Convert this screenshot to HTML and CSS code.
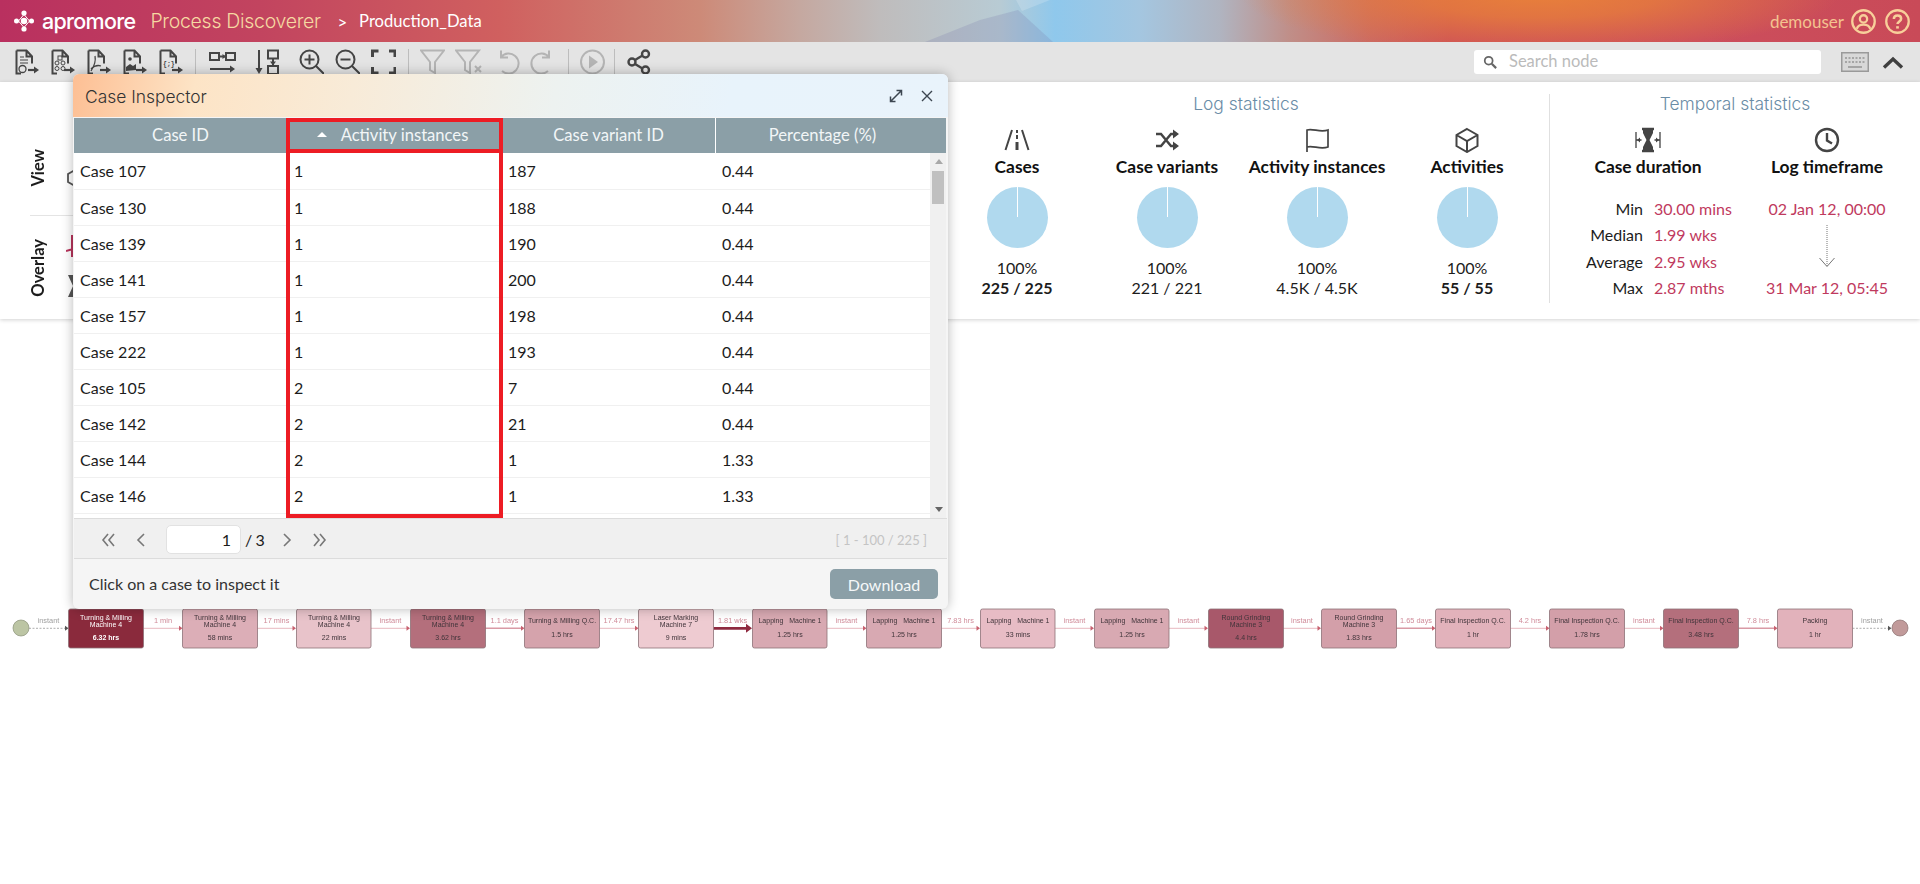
FILE: index.html
```html
<!DOCTYPE html>
<html lang="en">
<head>
<meta charset="utf-8">
<title>Process Discoverer</title>
<link rel="stylesheet" href="styles.css">
</head>
<body>
<svg class="defs" width="0" height="0" aria-hidden="true">
  <symbol id="doc" viewBox="0 0 25 26">
    <path d="M2.5 1.5h10l5.500 6v7M12.500 1.500v6h5.500M7 24.500H2.500v-23" fill="none" stroke="currentColor" stroke-width="2"/>
    <path d="M14 21h7" fill="none" stroke="currentColor" stroke-width="2.200"/>
    <path d="M20 17.500l5 3.500-5 3.500z" fill="currentColor"/>
  </symbol>
  <symbol id="chev2" viewBox="0 0 16 16">
    <path d="M7 2L2 8l5 6M13 2L8 8l5 6" fill="none" stroke="currentColor" stroke-width="1.600"/>
  </symbol>
</svg>

<header class="topbar">
  <svg class="logo" viewBox="0 0 20 22" width="20" height="22">
    <path d="M10 4.500L15.500 11 10 17.500 4.500 11z" fill="none" stroke="#fff" stroke-width="1"/>
    <circle cx="10" cy="11" r="3.200" fill="#fff"/>
    <circle cx="10" cy="3" r="2.600" fill="#fff"/><circle cx="10" cy="19" r="2.600" fill="#fff"/>
    <circle cx="2.500" cy="11" r="2.500" fill="#fff"/><circle cx="17.500" cy="11" r="2.500" fill="#fff"/>
  </svg>
  <span class="brand">apromore</span>
  <span class="product">Process Discoverer</span>
  <span class="crumb-sep">&gt;</span>
  <span class="crumb">Production_Data</span>
  <div class="user">
    <span class="username">demouser</span>
    <svg viewBox="0 0 24 24" width="25" height="25" class="user-icon"><circle cx="12" cy="12" r="10.800"/><circle cx="12" cy="9.500" r="3.500"/><path d="M5.500 19c1-3 3.500-4 6.500-4s5.500 1 6.500 4"/></svg>
    <svg viewBox="0 0 24 24" width="25" height="25" class="user-icon"><circle cx="12" cy="12" r="10.800"/><path d="M8.500 9.500c0-2 1.500-3.300 3.500-3.300s3.500 1.300 3.500 3.100c0 2.600-3.500 2.700-3.500 5.200" stroke-width="2.400"/><path d="M12 16.500v2.300" stroke-width="2.600"/></svg>
  </div>
</header>

<nav class="toolbar">
  <svg class="tool" viewBox="0 0 25 26"><use href="#doc"/><path d="M6 8h4M6 11h8M6 14h8" stroke="currentColor" fill="none"/><circle cx="8.500" cy="20" r="3.500" fill="none" stroke="currentColor" stroke-width="1.300"/></svg>
  <svg class="tool" viewBox="0 0 25 26"><use href="#doc"/><g fill="none" stroke="currentColor"><rect x="8" y="7" width="4" height="4"/><circle cx="7" cy="14" r="2"/><circle cx="13" cy="14" r="2"/><circle cx="7" cy="19.500" r="2"/><circle cx="13" cy="19.500" r="2"/></g></svg>
  <svg class="tool" viewBox="0 0 25 26"><use href="#doc"/><path d="M9 7c1 5 0 9-4 15M5 20c3-3 7-4 10-3" fill="none" stroke="currentColor" stroke-width="1.300"/></svg>
  <svg class="tool" viewBox="0 0 25 26"><use href="#doc"/><circle cx="8" cy="10" r="1.800" fill="currentColor"/><path d="M4 22v-4l4-3 3 2 3-2v6z" fill="currentColor"/></svg>
  <svg class="tool" viewBox="0 0 25 26"><use href="#doc"/><text x="5" y="17" class="tool-json">{;}</text></svg>
  <span class="sep sep-a"></span>
  <svg class="tool tool-wide" viewBox="0 0 27 26" ><g fill="none" stroke="currentColor" stroke-width="2"><rect x="1" y="4" width="9" height="7"/><rect x="17" y="4" width="9" height="7"/><path d="M10 7.500h7M1 20h23"/></g><path d="M21 16.500l5 3.500-5 3.500zM13.500 5l3.500 2.500-3.500 2.500z" fill="currentColor"/></svg>
  <svg class="tool tool-b" viewBox="0 0 25 26"><g fill="none" stroke="currentColor" stroke-width="2"><rect x="13" y="1.500" width="10" height="8"/><rect x="13" y="17" width="10" height="8"/><path d="M18 9.500V17M4 1v22"/></g><path d="M.5 19l3.500 6 3.500-6zM15 12.500l3 4 3-4z" fill="currentColor"/></svg>
  <svg class="tool tool-c" viewBox="0 0 25 26"><g fill="none" stroke="currentColor" stroke-width="2"><circle cx="10.500" cy="10.500" r="9"/><path d="M17 17l8 8M10.500 5.500v10M5.500 10.500h10"/></g></svg>
  <svg class="tool tool-d" viewBox="0 0 25 26"><g fill="none" stroke="currentColor" stroke-width="2"><circle cx="10.500" cy="10.500" r="9"/><path d="M17 17l8 8M5.500 10.500h10"/></g></svg>
  <svg class="tool tool-d" viewBox="0 0 25 26"><path d="M1.500 8V2h6M18 2h6v6M24 18v6h-6M7.500 24h-6v-6" fill="none" stroke="currentColor" stroke-width="3"/></svg>
  <span class="sep sep-b"></span>
  <svg class="tool tool-off tool-e" viewBox="0 0 25 26"><path d="M1 1.500h23L15 13v11l-5-3v-8z" fill="none" stroke="currentColor" stroke-width="2"/></svg>
  <svg class="tool tool-off tool-f" viewBox="0 0 28 26"><path d="M1 1.500h23L15 13v11l-5-3v-8z" fill="none" stroke="currentColor" stroke-width="2"/><path d="M20 17l6 6M26 17l-6 6" stroke="currentColor" stroke-width="2"/></svg>
  <svg class="tool tool-off tool-g" viewBox="0 0 25 26"><path d="M6 8a10 10 0 1 1 1 14M6 1.500V8.500h7" fill="none" stroke="currentColor" stroke-width="2"/></svg>
  <svg class="tool tool-off tool-h" viewBox="0 0 25 26"><path d="M19 8a10 10 0 1 0-1 14M19 1.500V8.500h-7" fill="none" stroke="currentColor" stroke-width="2"/></svg>
  <span class="sep sep-c"></span>
  <svg class="tool tool-off tool-i" viewBox="0 0 25 26"><circle cx="12.500" cy="13" r="11.500" fill="none" stroke="currentColor" stroke-width="2"/><path d="M9 6.500l9 6.500-9 6.500z" fill="currentColor"/></svg>
  <span class="sep sep-d"></span>
  <svg class="tool tool-j" viewBox="0 0 24 26"><g fill="none" stroke="currentColor" stroke-width="2.400"><circle cx="18.500" cy="5" r="3.500"/><circle cx="5" cy="13" r="3.500"/><circle cx="18.500" cy="21" r="3.500"/><path d="M8 11l7.500-4.500M8 15l7.500 4.500"/></g></svg>

  <label class="search">
    <svg viewBox="0 0 16 16" width="14" height="14"><circle cx="6.500" cy="6.500" r="4.500" fill="none" stroke="#666" stroke-width="2"/><path d="M10 10l5 5" stroke="#666" stroke-width="2.500"/></svg>
    <span class="placeholder">Search node</span>
  </label>
  <svg class="keyboard" viewBox="0 0 28 20" width="28" height="20"><rect x=".75" y=".75" width="26.500" height="18.500" fill="#d8d8d8" stroke="#9a9a9a" stroke-width="1.500"/><path d="M4 6h20M4 10h20" stroke="#a5a5a5" stroke-width="2" stroke-dasharray="2 1.500"/><path d="M7 15h14" stroke="#a5a5a5" stroke-width="2"/></svg>
  <svg class="collapse" viewBox="0 0 22 13" width="22" height="13"><path d="M2 11.500L11 3l9 8.500" fill="none" stroke="#3f3f3f" stroke-width="3.400"/></svg>
</nav>

<section class="stats">
  <div class="modes">
    <div class="mode">
      <span class="mode-label">View</span>
      <svg viewBox="0 0 16 18" width="16" height="18" class="mode-icon"><path d="M8 1l7 4v8l-7 4-7-4V5z" fill="none" stroke="#555" stroke-width="1.800"/></svg>
    </div>
    <div class="mode mode-overlay">
      <span class="mode-label">Overlay</span>
      <div class="mode-icons">
        <svg viewBox="0 0 16 24" width="16" height="24"><path d="M6 1v22M0 17l7-2" fill="none" stroke="#b8345c" stroke-width="2"/></svg>
        <svg viewBox="0 0 16 24" width="16" height="24"><path d="M2 1h12L9 12l5 11H2l5-11z" fill="#555"/></svg>
      </div>
    </div>
  </div>

  <div class="stat-group log">
    <h2 class="group-title">Log statistics</h2>
    <div class="stat-cols">
      <div class="stat">
        <svg class="stat-icon" viewBox="0 0 26 26"><path d="M8 3L1.500 23M18 3l6.500 20" fill="none" stroke="#444" stroke-width="2"/><path d="M12 3h2v3h-2zM12 8h2v4h-2zM11.500 15h3v8h-3z" fill="#444"/></svg>
        <h3 class="stat-name">Cases</h3>
        <div class="pie"></div>
        <div class="pct">100%</div>
        <div class="ratio strong">225 / 225</div>
      </div>
      <div class="stat">
        <svg class="stat-icon" viewBox="0 0 26 26"><path d="M2 7h5l10 12h4M2 19h5l10-12h4" fill="none" stroke="#444" stroke-width="2.400"/><path d="M19 2.500l6 4.500-6 4.500zM19 14.500l6 4.500-6 4.500z" fill="#444"/></svg>
        <h3 class="stat-name">Case variants</h3>
        <div class="pie"></div>
        <div class="pct">100%</div>
        <div class="ratio">221 / 221</div>
      </div>
      <div class="stat">
        <svg class="stat-icon" viewBox="0 0 26 26"><path d="M3 25V3c6-2 13 3 21 0v17c-8 3-15-2-21 0" fill="none" stroke="#444" stroke-width="1.700"/></svg>
        <h3 class="stat-name">Activity instances</h3>
        <div class="pie"></div>
        <div class="pct">100%</div>
        <div class="ratio">4.5K / 4.5K</div>
      </div>
      <div class="stat">
        <svg class="stat-icon" viewBox="0 0 26 26"><path d="M13 2l10.500 6v11L13 25 2.500 19V8zM2.500 8L13 14l10.500-6M13 14v11" fill="none" stroke="#444" stroke-width="2"/></svg>
        <h3 class="stat-name">Activities</h3>
        <div class="pie"></div>
        <div class="pct">100%</div>
        <div class="ratio strong">55 / 55</div>
      </div>
    </div>
  </div>

  <div class="stat-group temporal">
    <h2 class="group-title">Temporal statistics</h2>
    <div class="temporal-cols">
      <div class="duration">
        <svg class="stat-icon" viewBox="0 0 26 26"><path d="M7 2h12M7 24h12" stroke="#444" stroke-width="2.500"/><path d="M8 3h10v3l-3.500 7 3.500 7v3H8v-3l3.500-7L8 6z" fill="#444"/><path d="M1 5v16M25 5v16M1.500 13h5M19.500 13h5" stroke="#444" stroke-width="1.300"/><path d="M2 13l3-2.500v5zM24 13l-3-2.500v5z" fill="#444"/></svg>
        <h3 class="stat-name">Case duration</h3>
        <dl class="duration-list">
          <dt>Min</dt><dd>30.00 mins</dd>
          <dt>Median</dt><dd>1.99 wks</dd>
          <dt>Average</dt><dd>2.95 wks</dd>
          <dt>Max</dt><dd>2.87 mths</dd>
        </dl>
      </div>
      <div class="timeframe">
        <svg class="stat-icon" viewBox="0 0 26 26"><circle cx="13" cy="13" r="11" fill="none" stroke="#444" stroke-width="2.400"/><path d="M13 6v7.500l5 3" fill="none" stroke="#444" stroke-width="2.400"/></svg>
        <h3 class="stat-name">Log timeframe</h3>
        <div class="time-value">02 Jan 12, 00:00</div>
        <svg class="time-arrow" viewBox="0 0 18 44" width="18" height="44"><path d="M9 0v41" stroke="#777" stroke-dasharray="1 1" fill="none"/><path d="M1.500 33L9 41.500 16.500 33" fill="none" stroke="#777"/></svg>
        <div class="time-value">31 Mar 12, 05:45</div>
      </div>
    </div>
  </div>
</section>

<main class="map">
  <svg class="map-svg" viewBox="0 600 1920 60" width="1920" height="60">
    <circle cx="21" cy="628" r="8" class="start"/>
    <circle cx="1900" cy="628" r="8" class="end"/>
    <g class="edges">
      <path class="e-dash" d="M29 628.300h36"/><path class="a-grey" d="M65 625.800l3.500 2.500-3.500 2.500z"/>
      <path class="e-l" d="M143.500 628.300h36"/><path class="a" d="M179 625.800l3.500 2.500-3.500 2.500z"/>
      <path class="e-l" d="M257.500 628.300h36"/><path class="a" d="M292.500 625.800l3.500 2.500-3.500 2.500z"/>
      <path class="e-l" d="M371 628.300h36"/><path class="a" d="M406.500 625.800l3.500 2.500-3.500 2.500z"/>
      <path class="e-m" d="M485 628.300h36"/><path class="a" d="M521 625.800l3.500 2.500-3.500 2.500z"/>
      <path class="e-l" d="M599.500 628.300h36"/><path class="a" d="M635 625.800l3.500 2.500-3.500 2.500z"/>
      <path class="e-h" d="M713.500 628.300h33"/><path class="a-h" d="M746 623.800l6 4.500-6 4.500z"/>
      <path class="e-l" d="M827 628.300h36"/><path class="a" d="M863 625.800l3.500 2.500-3.500 2.500z"/>
      <path class="e-l" d="M941.500 628.300h36"/><path class="a" d="M976.500 625.800l3.500 2.500-3.500 2.500z"/>
      <path class="e-l" d="M1055 628.300h36"/><path class="a" d="M1090.500 625.800l3.500 2.500-3.500 2.500z"/>
      <path class="e-l" d="M1169 628.300h36"/><path class="a" d="M1204.500 625.800l3.500 2.500-3.500 2.500z"/>
      <path class="e-l" d="M1283 628.300h36"/><path class="a" d="M1317.500 625.800l3.500 2.500-3.500 2.500z"/>
      <path class="e-m" d="M1396 628.300h36"/><path class="a" d="M1432 625.800l3.500 2.500-3.500 2.500z"/>
      <path class="e-l" d="M1510.500 628.300h36"/><path class="a" d="M1546 625.800l3.500 2.500-3.500 2.500z"/>
      <path class="e-l" d="M1624.500 628.300h36"/><path class="a" d="M1660 625.800l3.500 2.500-3.500 2.500z"/>
      <path class="e-m" d="M1738.500 628.300h36"/><path class="a" d="M1774 625.800l3.500 2.500-3.500 2.500z"/>
      <path class="e-dash" d="M1852.500 628.300h36"/><path class="a-grey" d="M1888 625.800l3.500 2.500-3.500 2.500z"/>
    </g>
    <g class="edge-labels">
      <text x="48.500" y="623" class="lbl-grey">instant</text>
      <text x="163" y="623">1 min</text>
      <text x="276.500" y="623">17 mins</text>
      <text x="390.500" y="623">instant</text>
      <text x="504.500" y="623">1.1 days</text>
      <text x="619" y="623">17.47 hrs</text>
      <text x="732.500" y="623">1.81 wks</text>
      <text x="846.500" y="623">instant</text>
      <text x="960.500" y="623">7.83 hrs</text>
      <text x="1074.500" y="623">instant</text>
      <text x="1188.500" y="623">instant</text>
      <text x="1302" y="623">instant</text>
      <text x="1416" y="623">1.65 days</text>
      <text x="1530" y="623">4.2 hrs</text>
      <text x="1644" y="623">instant</text>
      <text x="1758" y="623">7.8 hrs</text>
      <text x="1872" y="623" class="lbl-grey">instant</text>
    </g>
    <g class="nodes">
      <g class="node-dark"><rect x="68.500" y="609" width="75" height="39" rx="2" class="c1"/><text x="106" y="620">Turning &amp; Milling</text><text x="106" y="626.500">Machine 4</text><text x="106" y="640" class="bold">6.32 hrs</text></g>
      <g><rect x="182.500" y="609" width="75" height="39" rx="2" class="c2"/><text x="220" y="620">Turning &amp; Milling</text><text x="220" y="626.500">Machine 4</text><text x="220" y="640">58 mins</text></g>
      <g><rect x="296.500" y="609" width="74.500" height="39" rx="2" class="c3"/><text x="334" y="620">Turning &amp; Milling</text><text x="334" y="626.500">Machine 4</text><text x="334" y="640">22 mins</text></g>
      <g><rect x="410.500" y="609" width="75" height="39" rx="2" class="c4"/><text x="448" y="620">Turning &amp; Milling</text><text x="448" y="626.500">Machine 4</text><text x="448" y="640">3.62 hrs</text></g>
      <g><rect x="524.500" y="609" width="75" height="39" rx="2" class="c5"/><text x="562" y="623">Turning &amp; Milling Q.C.</text><text x="562" y="637">1.5 hrs</text></g>
      <g><rect x="638.500" y="609" width="75" height="39" rx="2" class="c6"/><text x="676" y="620">Laser Marking</text><text x="676" y="626.500">Machine 7</text><text x="676" y="640">9 mins</text></g>
      <g><rect x="752.500" y="609" width="74.500" height="39" rx="2" class="c7"/><text x="790" y="622.500">Lapping&#160;&#160; Machine 1</text><text x="790" y="637">1.25 hrs</text></g>
      <g><rect x="866.500" y="609" width="75" height="39" rx="2" class="c7"/><text x="904" y="622.500">Lapping&#160;&#160; Machine 1</text><text x="904" y="637">1.25 hrs</text></g>
      <g><rect x="980.500" y="609" width="74.500" height="39" rx="2" class="c8"/><text x="1018" y="622.500">Lapping&#160;&#160; Machine 1</text><text x="1018" y="637">33 mins</text></g>
      <g><rect x="1094.500" y="609" width="74.500" height="39" rx="2" class="c7"/><text x="1132" y="622.500">Lapping&#160;&#160; Machine 1</text><text x="1132" y="637">1.25 hrs</text></g>
      <g><rect x="1208.500" y="609" width="75" height="39" rx="2" class="c9"/><text x="1246" y="620">Round Grinding</text><text x="1246" y="626.500">Machine 3</text><text x="1246" y="640">4.4 hrs</text></g>
      <g><rect x="1321.500" y="609" width="75" height="39" rx="2" class="c10"/><text x="1359" y="620">Round Grinding</text><text x="1359" y="626.500">Machine 3</text><text x="1359" y="640">1.83 hrs</text></g>
      <g><rect x="1435.500" y="609" width="75" height="39" rx="2" class="c11"/><text x="1473" y="623">Final Inspection Q.C.</text><text x="1473" y="637">1 hr</text></g>
      <g><rect x="1549.500" y="609" width="75" height="39" rx="2" class="c10"/><text x="1587" y="623">Final Inspection Q.C.</text><text x="1587" y="637">1.78 hrs</text></g>
      <g><rect x="1663.500" y="609" width="75" height="39" rx="2" class="c4"/><text x="1701" y="623">Final Inspection Q.C.</text><text x="1701" y="637">3.48 hrs</text></g>
      <g><rect x="1777.500" y="609" width="75" height="39" rx="2" class="c11"/><text x="1815" y="622.500">Packing</text><text x="1815" y="637">1 hr</text></g>
    </g>
  </svg>
</main>

<aside class="modal">
  <div class="modal-head">
    <span class="modal-title">Case Inspector</span>
    <svg class="modal-action" viewBox="0 0 14 14" width="14" height="14"><path d="M2 12L12 2M7.500 1.500h5v5M1.500 7.500v5h5" fill="none" stroke="#3c4650" stroke-width="1.500"/></svg>
    <svg class="modal-action" viewBox="0 0 14 14" width="14" height="14"><path d="M2 2l10 10M12 2L2 12" fill="none" stroke="#3c4650" stroke-width="1.400"/></svg>
  </div>
  <div class="grid-head">
    <div class="gh">Case ID</div>
    <div class="gh gh-sort"><span class="sort-arrow"></span>Activity instances</div>
    <div class="gh">Case variant ID</div>
    <div class="gh gh-last">Percentage (%)</div>
  </div>
  <div class="grid-body">
    <table class="cases">
      <tbody>
        <tr><td>Case 107</td><td>1</td><td>187</td><td>0.44</td></tr>
        <tr><td>Case 130</td><td>1</td><td>188</td><td>0.44</td></tr>
        <tr><td>Case 139</td><td>1</td><td>190</td><td>0.44</td></tr>
        <tr><td>Case 141</td><td>1</td><td>200</td><td>0.44</td></tr>
        <tr><td>Case 157</td><td>1</td><td>198</td><td>0.44</td></tr>
        <tr><td>Case 222</td><td>1</td><td>193</td><td>0.44</td></tr>
        <tr><td>Case 105</td><td>2</td><td>7</td><td>0.44</td></tr>
        <tr><td>Case 142</td><td>2</td><td>21</td><td>0.44</td></tr>
        <tr><td>Case 144</td><td>2</td><td>1</td><td>1.33</td></tr>
        <tr><td>Case 146</td><td>2</td><td>1</td><td>1.33</td></tr>
      </tbody>
    </table>
    <div class="scrollbar">
      <span class="sb-up"></span>
      <span class="sb-thumb"></span>
      <span class="sb-down"></span>
    </div>
  </div>
  <div class="paging">
    <svg class="pg pg-first" viewBox="0 0 16 16"><use href="#chev2"/></svg>
    <svg class="pg pg-prev" viewBox="0 0 10 16"><path d="M8 2L2 8l6 6" fill="none" stroke="currentColor" stroke-width="1.600"/></svg>
    <span class="pg-input">1</span>
    <span class="pg-total">/ 3</span>
    <svg class="pg pg-next" viewBox="0 0 10 16"><path d="M2 2l6 6-6 6" fill="none" stroke="currentColor" stroke-width="1.600"/></svg>
    <svg class="pg pg-last" viewBox="0 0 16 16"><g transform="translate(16 0) scale(-1 1)"><use href="#chev2"/></g></svg>
    <span class="pg-range">[ 1 - 100 / 225 ]</span>
  </div>
  <div class="modal-foot">
    <span class="hint">Click on a case to inspect it</span>
    <button class="download" type="button">Download</button>
  </div>
  <div class="highlight"><div class="highlight-head"></div></div>
</aside>
</body>
</html>
```
FILE: styles.css
```css
* { box-sizing: border-box; }
html, body { margin: 0; height: 100%; }
body {
  display: flex;
  flex-direction: column;
  height: 884px;
  overflow: hidden;
  background: #fff;
  color: #1c1c1c;
  font-family: "Lato", "Noto Sans", sans-serif;
  font-size: 16px;
  position: relative;
}
.defs { position: absolute; }

/* top bar */
.topbar {
  position: relative;
  display: flex;
  align-items: center;
  flex: 0 0 42px;
  padding-left: 14px;
  background:
    radial-gradient(ellipse 300px 60px at 1540px -6px, #e8803a 0, rgba(232,128,58,.75) 40%, rgba(232,128,58,0) 100%),
    linear-gradient(90deg, #b9305f 0, #c2445f 260px, #d0605f 500px, #cd8a78 700px, #c5a8a0 800px, #bfbcbc 880px, #b8cbd4 1000px, #8fc8ec 1055px, #a4c6e0 1140px, #b0b4c0 1220px, #c08e88 1290px, #cc6a62 1370px, #cd5058 1450px, #cc4e5c 1700px, #c94a58 1920px);
}
.topbar::before {
  content: "";
  position: absolute;
  inset: 0;
  background: rgba(120,120,170,.22);
  clip-path: polygon(925px 42px, 980px 20px, 1018px 10px, 1053px 42px);
}
.topbar::after {
  content: "";
  position: absolute;
  inset: 0;
  background: rgba(255,255,255,.18);
  clip-path: polygon(1016px 0, 1050px 0, 1022px 11px);
}
.logo { flex: none; margin-right: 8px; }
.brand { color: #fff; font-family: "Inter", sans-serif; font-size: 21.500px; font-weight: 500; letter-spacing: -.7px; position: relative; }
.product { color: #f6d9a2; margin-left: 15px; font-family: "Inter", sans-serif; font-size: 19.500px; font-weight: 300; letter-spacing: -.3px; }
.crumb-sep { color: #fff; margin-left: 17px; font-size: 14px; font-family: "Inter", sans-serif; }
.crumb { color: #fff; margin-left: 12px; font-size: 16.600px; }
.user { position: relative; margin-left: auto; display: flex; align-items: center; padding-right: 10px; color: #f4c390; }
.username { font-size: 17px; margin-right: 7px; }
.user-icon { fill: none; stroke: #f8cf9a; stroke-width: 2.200; margin-left: 0; }
.user-icon + .user-icon { margin-left: 9px; }

/* toolbar */
.toolbar {
  display: flex;
  align-items: center;
  flex: 0 0 40px;
  padding-left: 14px;
  background: #e4e4e4;
}
.tool { width: 25px; height: 26px; flex: none; color: #454545; margin-right: 11px; }
.tool-off { color: #b4b4b4; }
.tool-json { font-family: "Liberation Mono", monospace; font-size: 6.500px; font-weight: 700; fill: currentColor; }
.tool-wide { width: 27px; margin-right: 19px; }
.tool-b { margin-right: 19px; }
.tool-c { margin-right: 11px; }
.tool-d { margin-right: 11px; }
.tool-e { margin-right: 10px; }
.tool-f { width: 28px; margin-right: 12px; }
.tool-g { margin-right: 10px; }
.tool-h { margin-right: 13px; }
.tool-i { margin-right: 9px; }
.tool-j { width: 24px; margin-left: 12px; margin-right: 0; }
.sep { flex: none; width: 1px; height: 26px; background: #bdbdbd; }
.sep-a { margin: 0 13px 0 1px; }
.sep-b { margin: 0 11px 0 1px; }
.sep-c { margin: 0 11px 0 0; }
.sep-d { margin: 0; }
.search {
  display: flex;
  align-items: center;
  gap: 12px;
  width: 347px;
  height: 24px;
  margin-left: auto;
  padding-left: 9px;
  background: #fff;
  border-radius: 3px;
}
.placeholder { color: #bbb; font-size: 16.500px; line-height: 22px; margin-top: -2px; }
.keyboard { flex: none; margin-left: 20px; }
.collapse { flex: none; margin-left: 13px; margin-right: 16px; }

/* statistics */
.stats {
  display: flex;
  flex: 0 0 237px;
  padding: 12px 0 16px;
  background: #fff;
  box-shadow: 0 1px 4px rgba(0,0,0,.18);
  position: relative;
}
.modes { flex: 1; padding-left: 30px; }
.mode { display: flex; align-items: flex-end; height: 122px; border-bottom: 1px solid #e4e4e4; padding-bottom: 28px; gap: 20px; }
.mode-overlay { border-bottom: 0; padding-bottom: 0; height: 81px; align-items: flex-end; gap: 18px; }
.mode-label { writing-mode: vertical-rl; transform: rotate(180deg); font-weight: 700; font-size: 16.500px; margin-left: -2px; }
.mode-icon { flex: none; margin-left: -1px; }
.mode-icons { display: flex; flex-direction: column; gap: 16px; margin-bottom: -1px; }

.stat-group { flex: none; text-align: center; }
.log { width: 606px; }
.temporal { width: 371px; border-left: 1px solid #e0e0e0; }
.group-title {
  margin: 0;
  height: 20px;
  line-height: 20px;
  font-family: "Inter", sans-serif;
  font-size: 17.400px;
  font-weight: 300;
  color: #6a8ca6;
}
.stat-cols { display: flex; margin-left: -1px; padding-right: 5px; }
.stat { width: 150px; display: flex; flex-direction: column; align-items: center; }
.stat-icon { display: block; width: 26px; height: 26px; margin: 13px auto 0; }
.stat-name { margin: 4px 0 0; height: 20px; line-height: 20px; font-size: 17.400px; font-weight: 700; color: #111; white-space: nowrap; }
.pie {
  position: relative;
  width: 61px;
  height: 61px;
  margin-top: 10px;
  border-radius: 50%;
  background: #b0d9ee;
}
.pie::after {
  content: "";
  position: absolute;
  left: 30px;
  top: 0;
  width: 1px;
  height: 30px;
  background: #fff;
}
.pct { margin-top: 10px; height: 20px; line-height: 20px; font-size: 16px; }
.ratio { height: 20px; line-height: 20px; font-size: 16px; }
.strong { font-weight: 700; }

.temporal-cols { display: flex; }
.duration { width: 196px; }
.timeframe { width: 162px; }
.duration-list {
  display: grid;
  grid-template-columns: 93px 1fr;
  column-gap: 11px;
  margin: 19px 0 0;
  line-height: 26.400px;
  white-space: nowrap;
}
.duration-list dt { text-align: right; color: #1c1c1c; }
.duration-list dd { margin: 0; text-align: left; color: #bf3a5e; }
.time-value { color: #bf3a5e; line-height: 26px; white-space: nowrap; }
.timeframe .stat-name + .time-value { margin-top: 19px; }
.time-arrow { display: block; margin: 3px auto 6px; }

/* process map */
.map { flex: 1; padding-top: 281px; }
.map-svg { display: block; filter: blur(.45px); }
.start { fill: #bcc5a4; stroke: #8a9078; stroke-width: .7; }
.end { fill: #c19a9a; stroke: #8a7070; stroke-width: .7; }
.edges path { fill: none; }
.e-l { stroke: #ecc6cc; stroke-width: 1.200; }
.e-m { stroke: #d99aa5; stroke-width: 1.500; }
.e-h { stroke: #8f2a40; stroke-width: 2.800; }
.e-dash { stroke: #999; stroke-width: .8; stroke-dasharray: 2 1.500; }
.edges .a { fill: #c7606f; }
.edges .a-h { fill: #8f2a40; }
.edges .a-grey { fill: #555; }
.edge-labels text { font: 7.400px "Liberation Sans", sans-serif; text-anchor: middle; fill: #d08c9a; }
.edge-labels .lbl-grey { fill: #a0a0a0; }
.nodes rect { stroke: #8d7177; stroke-width: .8; }
.nodes text { font: 7px "Liberation Sans", sans-serif; text-anchor: middle; fill: #40343a; }
.nodes .node-dark text { fill: #fff; }
.nodes .node-dark .bold { font-weight: 700; }
.c1 { fill: #8a2a3c; }
.c2 { fill: #dcaeb7; }
.c3 { fill: #e8c3ca; }
.c4 { fill: #b46f7c; }
.c5 { fill: #d5a3ac; }
.c6 { fill: #eecbd1; }
.c7 { fill: #d8a9b2; }
.c8 { fill: #e7bcc5; }
.c9 { fill: #a8586a; }
.c10 { fill: #d39fa9; }
.c11 { fill: #e2b2bb; }

/* modal */
.modal {
  position: absolute;
  left: 73px;
  top: 74px;
  width: 875px;
  height: 535px;
  display: flex;
  flex-direction: column;
  background: #f5f5f5;
  border-radius: 6px;
  box-shadow: 0 0 12px rgba(0,0,0,.28);
}
.modal-head {
  display: flex;
  align-items: center;
  flex: 0 0 43px;
  margin-bottom: 1px;
  padding: 0 14px 0 12px;
  border-radius: 6px 6px 0 0;
  background: linear-gradient(100deg, #fdbf94 0, #fde4c6 14%, #f8ebd8 32%, #edf2f0 55%, #e8f3fb 75%, #e9f3fb 100%);
}
.modal-title { flex: 1; margin-top: 2px; font-family: "Inter", sans-serif; font-weight: 300; font-size: 17.400px; color: #333; }
.modal-action { flex: none; margin-left: 17px; }
.grid-head {
  display: flex;
  flex: 0 0 35px;
  margin: 0 2px 0 1px;
  background: #8b9fa7;
  color: #f2f6f7;
}
.gh {
  flex: 0 0 214px;
  display: flex;
  align-items: center;
  justify-content: center;
  padding-bottom: 2px;
  border-right: 1px solid #fff;
  font-size: 16.600px;
}
.gh-sort { padding-right: 4px; }
.gh-last { flex: 1; border-right: 0; padding-right: 17px; }
.sort-arrow {
  width: 0;
  height: 0;
  margin-right: 14px;
  border: 5px solid transparent;
  border-top: 0;
  border-bottom-color: #fff;
}
.grid-body { display: flex; flex: 0 0 365px; margin: 0 2px 0 1px; background: #fff; overflow: hidden; }
.cases { flex: 0 0 856px; width: 856px; table-layout: fixed; border-collapse: collapse; align-self: flex-start; }
.cases td {
  height: 36.100px;
  padding: 0 7px 0 6px;
  border-bottom: 1px solid #f0f0f0;
  font-size: 16px;
  white-space: nowrap;
}
.scrollbar { position: relative; flex: 1; background: #f0f0f0; }
.sb-thumb { position: absolute; left: 2px; right: 2px; top: 18px; height: 33px; background: #c0c0c0; }
.sb-up, .sb-down { position: absolute; left: 5px; width: 0; height: 0; border: 4px solid transparent; }
.sb-up { top: 6px; border-top: 0; border-bottom: 5px solid #a8a8a8; }
.sb-down { bottom: 6px; border-bottom: 0; border-top: 5px solid #666; }
.paging {
  display: flex;
  align-items: center;
  flex: 0 0 41px;
  margin: 0 1px;
  background: #f0f0f0;
  border-top: 1px solid #dcdcdc;
  border-bottom: 1px solid #dcdcdc;
  padding: 2px 20px 0 27px;
  font-size: 16px;
}
.pg { flex: none; color: #777; height: 16px; }
.pg-first { width: 16px; }
.pg-prev { width: 10px; margin-left: 19px; }
.pg-input {
  width: 75px;
  height: 29px;
  margin-left: 20px;
  padding-right: 9px;
  line-height: 27px;
  text-align: right;
  background: #fff;
  border: 1px solid #e2e2e2;
  border-radius: 5px;
}
.pg-total { margin-left: 4px; letter-spacing: -.4px; }
.pg-next { width: 10px; margin-left: 18px; }
.pg-last { width: 16px; margin-left: 19px; }
.pg-range { margin-left: auto; color: #c4c4c4; font-size: 13px; }
.modal-foot { display: flex; align-items: center; justify-content: space-between; flex: 1; padding: 0 10px 0 16px; }
.hint { color: #333; font-size: 16px; margin-top: -1px; }
.download {
  width: 108px;
  height: 30px;
  border: 0;
  border-radius: 5px;
  background: #8b9fa7;
  color: #f5f8f9;
  font: 16px "Lato", sans-serif;
}
.highlight {
  position: absolute;
  left: 213px;
  top: 44px;
  width: 217px;
  height: 400px;
  border: 4px solid #ed1c24;
}
.highlight-head { box-sizing: content-box; height: 27px; border-bottom: 4px solid #ed1c24; }
```
